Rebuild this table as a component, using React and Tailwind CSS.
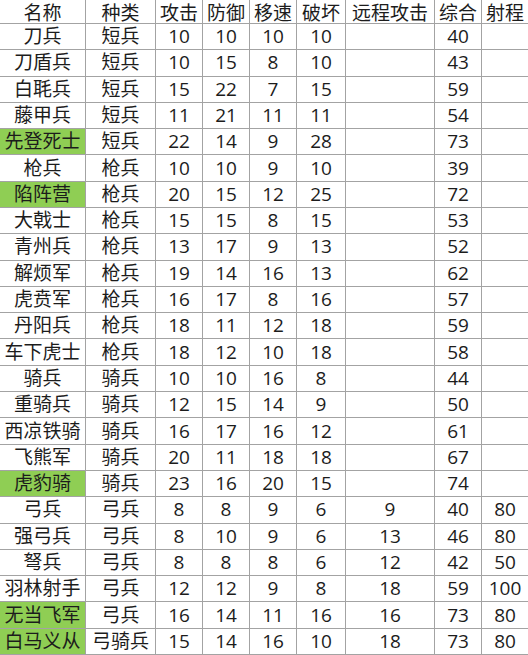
import React from "react";

const headers = ["名称", "种类", "攻击", "防御", "移速", "破坏", "远程攻击", "综合", "射程"];

const rows = [
  ["刀兵", "短兵", "10", "10", "10", "10", "", "40", "", false],
  ["刀盾兵", "短兵", "10", "15", "8", "10", "", "43", "", false],
  ["白毦兵", "短兵", "15", "22", "7", "15", "", "59", "", false],
  ["藤甲兵", "短兵", "11", "21", "11", "11", "", "54", "", false],
  ["先登死士", "短兵", "22", "14", "9", "28", "", "73", "", true],
  ["枪兵", "枪兵", "10", "10", "9", "10", "", "39", "", false],
  ["陷阵营", "枪兵", "20", "15", "12", "25", "", "72", "", true],
  ["大戟士", "枪兵", "15", "15", "8", "15", "", "53", "", false],
  ["青州兵", "枪兵", "13", "17", "9", "13", "", "52", "", false],
  ["解烦军", "枪兵", "19", "14", "16", "13", "", "62", "", false],
  ["虎贲军", "枪兵", "16", "17", "8", "16", "", "57", "", false],
  ["丹阳兵", "枪兵", "18", "11", "12", "18", "", "59", "", false],
  ["车下虎士", "枪兵", "18", "12", "10", "18", "", "58", "", false],
  ["骑兵", "骑兵", "10", "10", "16", "8", "", "44", "", false],
  ["重骑兵", "骑兵", "12", "15", "14", "9", "", "50", "", false],
  ["西凉铁骑", "骑兵", "16", "17", "16", "12", "", "61", "", false],
  ["飞熊军", "骑兵", "20", "11", "18", "18", "", "67", "", false],
  ["虎豹骑", "骑兵", "23", "16", "20", "15", "", "74", "", true],
  ["弓兵", "弓兵", "8", "8", "9", "6", "9", "40", "80", false],
  ["强弓兵", "弓兵", "8", "10", "9", "6", "13", "46", "80", false],
  ["弩兵", "弓兵", "8", "8", "8", "6", "12", "42", "50", false],
  ["羽林射手", "弓兵", "12", "12", "9", "8", "18", "59", "100", false],
  ["无当飞军", "弓兵", "16", "14", "11", "16", "16", "73", "80", true],
  ["白马义从", "弓骑兵", "15", "14", "16", "10", "18", "73", "80", true],
];

export default function App() {
  return (
    <div
      className="w-[528px] h-[655px] overflow-hidden bg-white text-[#1c1c1c] text-[19px] leading-none"
      style={{ fontFamily: '"Open Sans", "Noto Sans CJK SC", sans-serif' }}
    >
      <div className="grid h-[655px] grid-cols-[86px_70px_47px_47px_47px_49px_89px_47px_46px] grid-rows-[24px_repeat(24,minmax(0,1fr))]">
        {headers.map((h, i) => (
          <div
            key={"h" + i}
            className={
              "flex items-center justify-center pt-[3px] border-b border-[#a3a3a3] whitespace-nowrap " +
              (i < 8 ? "border-r" : "")
            }
          >
            {h}
          </div>
        ))}
        {rows.map((r, ri) =>
          r.slice(0, 9).map((c, ci) => (
            <div
              key={ri + "-" + ci}
              className={
                "flex items-center justify-center border-b border-[#a3a3a3] whitespace-nowrap " +
                (ci < 8 ? "border-r " : "") +
                (ci === 0 && r[9] ? "bg-[#8fce54]" : "")
              }
            >
              {c}
            </div>
          ))
        )}
      </div>
    </div>
  );
}
